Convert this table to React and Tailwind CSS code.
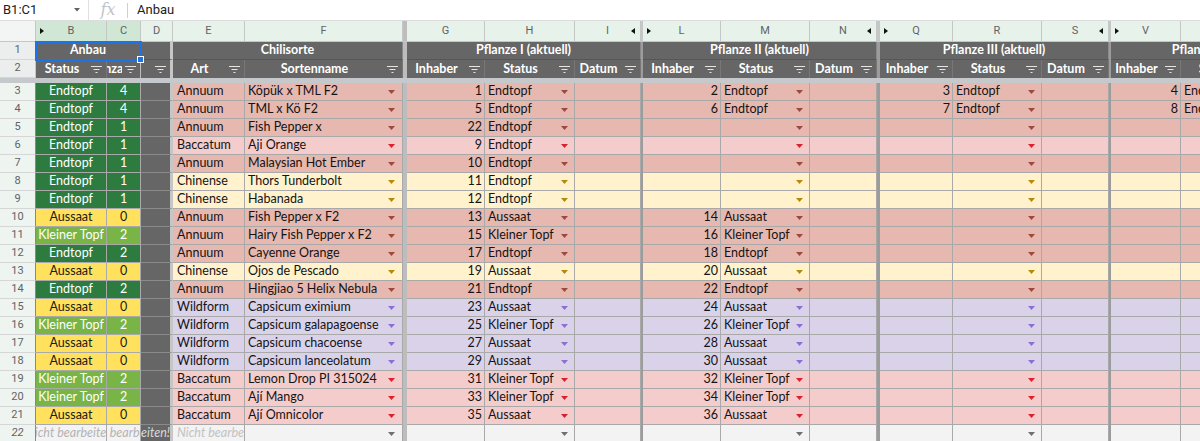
import React from 'react';

const STATUS = {
  Endtopf: 'bg-[#2e7b3f] text-white',
  'Kleiner Topf': 'bg-[#79b446] text-white',
  Aussaat: 'bg-[#ffe15d] text-[#1a1a1a]',
};
const ART = {
  Annuum: { bg: 'bg-[#e6b8af]', tri: '#9c4a3f' },
  Baccatum: { bg: 'bg-[#f4cccc]', tri: '#d9202c' },
  Chinense: { bg: 'bg-[#fff2cc]', tri: '#b58a0c' },
  Wildform: { bg: 'bg-[#d9d2e9]', tri: '#8b70d2' },
};

const ROWS = [
  { s: 'Endtopf', c: 4, art: 'Annuum', name: 'Köpük x TML F2', p: [[1, 'Endtopf'], [2, 'Endtopf'], [3, 'Endtopf'], [4, 'Endtopf']] },
  { s: 'Endtopf', c: 4, art: 'Annuum', name: 'TML x Kö F2', p: [[5, 'Endtopf'], [6, 'Endtopf'], [7, 'Endtopf'], [8, 'Endtopf']] },
  { s: 'Endtopf', c: 1, art: 'Annuum', name: 'Fish Pepper x', p: [[22, 'Endtopf']] },
  { s: 'Endtopf', c: 1, art: 'Baccatum', name: 'Aji Orange', p: [[9, 'Endtopf']] },
  { s: 'Endtopf', c: 1, art: 'Annuum', name: 'Malaysian Hot Ember', p: [[10, 'Endtopf']] },
  { s: 'Endtopf', c: 1, art: 'Chinense', name: 'Thors Tunderbolt', p: [[11, 'Endtopf']] },
  { s: 'Endtopf', c: 1, art: 'Chinense', name: 'Habanada', p: [[12, 'Endtopf']] },
  { s: 'Aussaat', c: 0, art: 'Annuum', name: 'Fish Pepper x F2', p: [[13, 'Aussaat'], [14, 'Aussaat']] },
  { s: 'Kleiner Topf', c: 2, art: 'Annuum', name: 'Hairy Fish Pepper x F2', p: [[15, 'Kleiner Topf'], [16, 'Kleiner Topf']] },
  { s: 'Endtopf', c: 2, art: 'Annuum', name: 'Cayenne Orange', p: [[17, 'Endtopf'], [18, 'Endtopf']] },
  { s: 'Aussaat', c: 0, art: 'Chinense', name: 'Ojos de Pescado', p: [[19, 'Aussaat'], [20, 'Aussaat']] },
  { s: 'Endtopf', c: 2, art: 'Annuum', name: 'Hingjiao 5 Helix Nebula', p: [[21, 'Endtopf'], [22, 'Endtopf']] },
  { s: 'Aussaat', c: 0, art: 'Wildform', name: 'Capsicum eximium', p: [[23, 'Aussaat'], [24, 'Aussaat']] },
  { s: 'Kleiner Topf', c: 2, art: 'Wildform', name: 'Capsicum galapagoense', p: [[25, 'Kleiner Topf'], [26, 'Kleiner Topf']] },
  { s: 'Aussaat', c: 0, art: 'Wildform', name: 'Capsicum chacoense', p: [[27, 'Aussaat'], [28, 'Aussaat']] },
  { s: 'Aussaat', c: 0, art: 'Wildform', name: 'Capsicum lanceolatum', p: [[29, 'Aussaat'], [30, 'Aussaat']] },
  { s: 'Kleiner Topf', c: 2, art: 'Baccatum', name: 'Lemon Drop PI 315024', p: [[31, 'Kleiner Topf'], [32, 'Kleiner Topf']] },
  { s: 'Kleiner Topf', c: 2, art: 'Baccatum', name: 'Ají Mango', p: [[33, 'Kleiner Topf'], [34, 'Kleiner Topf']] },
  { s: 'Aussaat', c: 0, art: 'Baccatum', name: 'Ají Omnicolor', p: [[35, 'Aussaat'], [36, 'Aussaat']] },
];

const GROUPS = [
  { title: 'Pflanze I (aktuell)', n: 'w-[78px]', s: 'w-[90px]', d: 'w-[66px]', all: 'w-[234px]', sep: 'w-[4px] bg-[#bdbdbd]', sepH: 'w-[4px] bg-[#bdbdbd]', letters: ['G', 'H', 'I'] },
  { title: 'Pflanze II (aktuell)', n: 'w-[78px]', s: 'w-[89px]', d: 'w-[67px]', all: 'w-[234px]', sep: 'w-[2px] bg-[#9c9c9c]', sepH: 'w-[2px] bg-[#c4c7c5]', letters: ['L', 'M', 'N'] },
  { title: 'Pflanze III (aktuell)', n: 'w-[73px]', s: 'w-[89px]', d: 'w-[67px]', all: 'w-[229px]', sep: 'w-[3px] bg-[#9c9c9c]', sepH: 'w-[3px] bg-[#c4c7c5]', letters: ['Q', 'R', 'S'] },
  { title: 'Pflanze IV (aktuell)', n: 'w-[70px]', s: 'w-[89px]', d: 'w-[67px]', all: 'w-[226px]', sep: 'w-[2px] bg-[#9c9c9c]', sepH: 'w-[2px] bg-[#c4c7c5]', letters: ['V', 'W', 'X'] },
];

function Tri({ c }) {
  return (
    <svg width="7" height="4" viewBox="0 0 7 4" className="shrink-0">
      <polygon points="0,0 7,0 3.5,4" fill={c} />
    </svg>
  );
}

function Filt() {
  return (
    <svg width="11" height="9" viewBox="0 0 11 9" className="shrink-0">
      <path d="M0 1.5h11M2.5 4.5h6M4.5 7.5h2" stroke="#e4e4e4" strokeWidth="1.1" />
    </svg>
  );
}

function Arrow({ dir }) {
  return (
    <svg width="4" height="6" viewBox="0 0 4 6" className="shrink-0">
      <polygon points={dir === 'r' ? '0,0 4,3 0,6' : '4,0 0,3 4,6'} fill="#111" />
    </svg>
  );
}

function CH({ w, label, sel, l, r }) {
  return (
    <div className={`${w} relative shrink-0 h-full flex items-center justify-center border-r border-[#c4c7c5] ${sel ? 'bg-[#d0e7d5]' : ''}`}>
      {l && (
        <span className="absolute left-[4px] top-[7px] flex">
          <Arrow dir="r" />
        </span>
      )}
      {label}
      {r && (
        <span className="absolute right-[5px] top-[7px] flex">
          <Arrow dir="l" />
        </span>
      )}
    </div>
  );
}

function H1({ w, children, extra = '' }) {
  return (
    <div className={`${w} shrink-0 h-full flex items-center justify-center overflow-hidden whitespace-nowrap bg-[#666666] text-white font-bold border-b border-[#1c7a36] ${extra}`}>
      {children}
    </div>
  );
}

function H2({ w, children, extra = '' }) {
  return (
    <div className={`${w} shrink-0 h-full flex items-center bg-[#666666] text-white font-bold border-r border-[#777777] ${extra}`}>
      <div className="flex-1 min-w-0 flex justify-center overflow-hidden whitespace-nowrap">
        <span className="shrink-0">{children}</span>
      </div>
      <div className="shrink-0 pl-[3px] pr-[4px] flex">
        <Filt />
      </div>
    </div>
  );
}

const cell = 'shrink-0 h-full flex items-center overflow-hidden whitespace-nowrap border-r border-b border-[#a9a9a9]';

function RowNum({ n, head }) {
  return (
    <div
      className={`w-[36px] shrink-0 h-full flex items-center justify-center border-b text-[11px] font-['Roboto',sans-serif] text-[#5f6368] ${
        head ? 'bg-[#eceeee] border-r border-r-[#c4c7c5] border-b-[#d6d6d6]' : 'bg-[#eef4f0] border-r border-r-[#5fa171] border-b-[#d6d6d6]'
      }`}
    >
      {n}
    </div>
  );
}

function DataRow({ n, r }) {
  const st = STATUS[r.s];
  const art = ART[r.art];
  return (
    <div className="flex h-[18px]">
      <RowNum n={n} />
      <div className={`${cell} w-[71px] justify-center ${st}`}>{r.s}</div>
      <div className={`${cell} w-[34px] justify-center ${st}`}>{r.c}</div>
      <div className="w-[32px] shrink-0 h-full bg-[#666666] border-r-[3px] border-r-[#c6c6c6] border-b border-b-[#8a8a8a]" />
      <div className={`${cell} w-[72px] pl-[4px] ${art.bg}`}>{r.art}</div>
      <div className={`${cell} w-[158px] pl-[3px] pr-[7px] justify-between ${art.bg}`}>
        <span>{r.name}</span>
        <Tri c={art.tri} />
      </div>
      {GROUPS.map((g, i) => {
        const p = r.p[i];
        return (
          <React.Fragment key={i}>
            <div className={`${g.sep} shrink-0 h-full`} />
            <div className={`${cell} ${g.n} justify-end pr-[2px] ${art.bg}`}>{p ? p[0] : ''}</div>
            <div className={`${cell} ${g.s} pl-[3px] pr-[6px] justify-between ${art.bg}`}>
              <span>{p ? p[1] : ''}</span>
              <Tri c={art.tri} />
            </div>
            <div className={`${cell} ${g.d} ${art.bg}`} />
          </React.Fragment>
        );
      })}
    </div>
  );
}

function LastRow() {
  const bg = 'bg-[#f3f3f3]';
  return (
    <div className="flex h-[18px] italic">
      <RowNum n={22} />
      <div className={`${cell} w-[71px] justify-center ${bg} text-[#b3b3b3]`}>
        <span className="shrink-0">Nicht bearbeiten!</span>
      </div>
      <div className={`${cell} w-[34px] justify-center ${bg} text-[#b3b3b3]`}>
        <span className="shrink-0">Nicht bearbeiten!</span>
      </div>
      <div className="w-[32px] shrink-0 h-full flex items-center justify-end overflow-hidden whitespace-nowrap bg-[#666666] text-[#d9d9d9] border-r-[3px] border-r-[#c6c6c6] border-b border-b-[#8a8a8a]">
        <span className="shrink-0">Nicht bearbeiten!</span>
      </div>
      <div className={`${cell} w-[72px] pl-[4px] ${bg} text-[#c2c2c2]`}>
        <span className="shrink-0">Nicht bearbeiten!</span>
      </div>
      <div className={`${cell} w-[158px] pr-[7px] justify-end ${bg}`}>
        <Tri c="#6f6f6f" />
      </div>
      {GROUPS.map((g, i) => (
        <React.Fragment key={i}>
          <div className={`${g.sep} shrink-0 h-full`} />
          <div className={`${cell} ${g.n} ${bg}`} />
          <div className={`${cell} ${g.s} pr-[6px] justify-end ${bg}`}>
            <Tri c="#6f6f6f" />
          </div>
          <div className={`${cell} ${g.d} ${bg}`} />
        </React.Fragment>
      ))}
    </div>
  );
}

export default function App() {
  return (
    <div className="relative w-[1200px] h-[441px] overflow-hidden bg-white font-['Lato',sans-serif] text-[12.5px] text-[#141414]">
      {/* formula bar */}
      <div className="flex h-[21px] items-center border-b border-[#dcdcdc] font-['Roboto',sans-serif] text-[13px] text-[#202124]">
        <div className="w-[88px] shrink-0 flex items-center justify-between pl-[3px] pr-[8px]">
          <span>B1:C1</span>
          <svg width="6" height="4" viewBox="0 0 6 4">
            <polygon points="0,0 6,0 3,3.5" fill="#5f6368" />
          </svg>
        </div>
        <div className="h-[20px] w-px bg-[#e0e0e0]" />
        <div className="w-[38px] flex justify-center font-['DejaVu_Serif',serif] italic text-[16px] leading-none text-[#c0c4c8]">fx</div>
        <div className="h-[15px] w-px bg-[#d0d0d0]" />
        <span className="ml-[9px]">Anbau</span>
      </div>

      {/* column headers */}
      <div className="flex h-[21px] border-b border-[#c4c7c5] bg-[#e7f2ea] font-['Roboto',sans-serif] text-[11px] text-[#5f6368]">
        <div className="w-[36px] shrink-0 h-full border-r border-[#c4c7c5] bg-[#f3f5f4]" />
        <CH w="w-[71px]" label="B" sel l />
        <CH w="w-[34px]" label="C" sel />
        <CH w="w-[32px]" label="D" />
        <CH w="w-[72px]" label="E" />
        <CH w="w-[158px]" label="F" />
        {GROUPS.map((g, i) => (
          <React.Fragment key={i}>
            <div className={`${g.sepH} shrink-0 h-full`} />
            <CH w={g.n} label={g.letters[0]} l={i > 0} />
            <CH w={g.s} label={g.letters[1]} />
            <CH w={g.d} label={g.letters[2]} r={i < 3} />
          </React.Fragment>
        ))}
      </div>

      {/* row 1 */}
      <div className="flex h-[18px] text-[12.5px]">
        <RowNum n={1} head />
        <H1 w="w-[105px]" extra="border-r border-r-[#bdbdbd]">Anbau</H1>
        <H1 w="w-[32px]" extra="border-r-[3px] border-r-[#c6c6c6]" />
        <H1 w="w-[230px]" extra="border-r border-r-[#8a8a8a]">Chilisorte</H1>
        {GROUPS.map((g, i) => (
          <React.Fragment key={i}>
            <div className={`${g.sep} shrink-0 h-full`} />
            <H1 w={g.all} extra="border-r border-r-[#8a8a8a]">{g.title}</H1>
          </React.Fragment>
        ))}
      </div>

      {/* row 2 */}
      <div className="flex h-[18px] text-[12.5px]">
        <RowNum n={2} head />
        <H2 w="w-[71px]">Status</H2>
        <H2 w="w-[34px]" extra="border-r-[#bdbdbd]">Anzahl</H2>
        <H2 w="w-[32px]" extra="border-r-[3px] border-r-[#c6c6c6]" />
        <H2 w="w-[72px]">Art</H2>
        <H2 w="w-[158px]">Sortenname</H2>
        {GROUPS.map((g, i) => (
          <React.Fragment key={i}>
            <div className={`${g.sep} shrink-0 h-full`} />
            <H2 w={g.n}>Inhaber</H2>
            <H2 w={g.s}>Status</H2>
            <H2 w={g.d}>Datum</H2>
          </React.Fragment>
        ))}
      </div>

      {/* frozen row divider */}
      <div className="h-[5px] bg-[#c6c9cc]" />

      {ROWS.map((r, i) => (
        <DataRow key={i} n={i + 3} r={r} />
      ))}
      <LastRow />

      {/* selection B1:C1 */}
      <div className="absolute left-[35px] top-[41px] w-[107px] h-[20px] border-2 border-[#1a73e8]" />
      <div className="absolute left-[137px] top-[56px] w-[7px] h-[7px] bg-[#1a73e8] border border-white" />
    </div>
  );
}
